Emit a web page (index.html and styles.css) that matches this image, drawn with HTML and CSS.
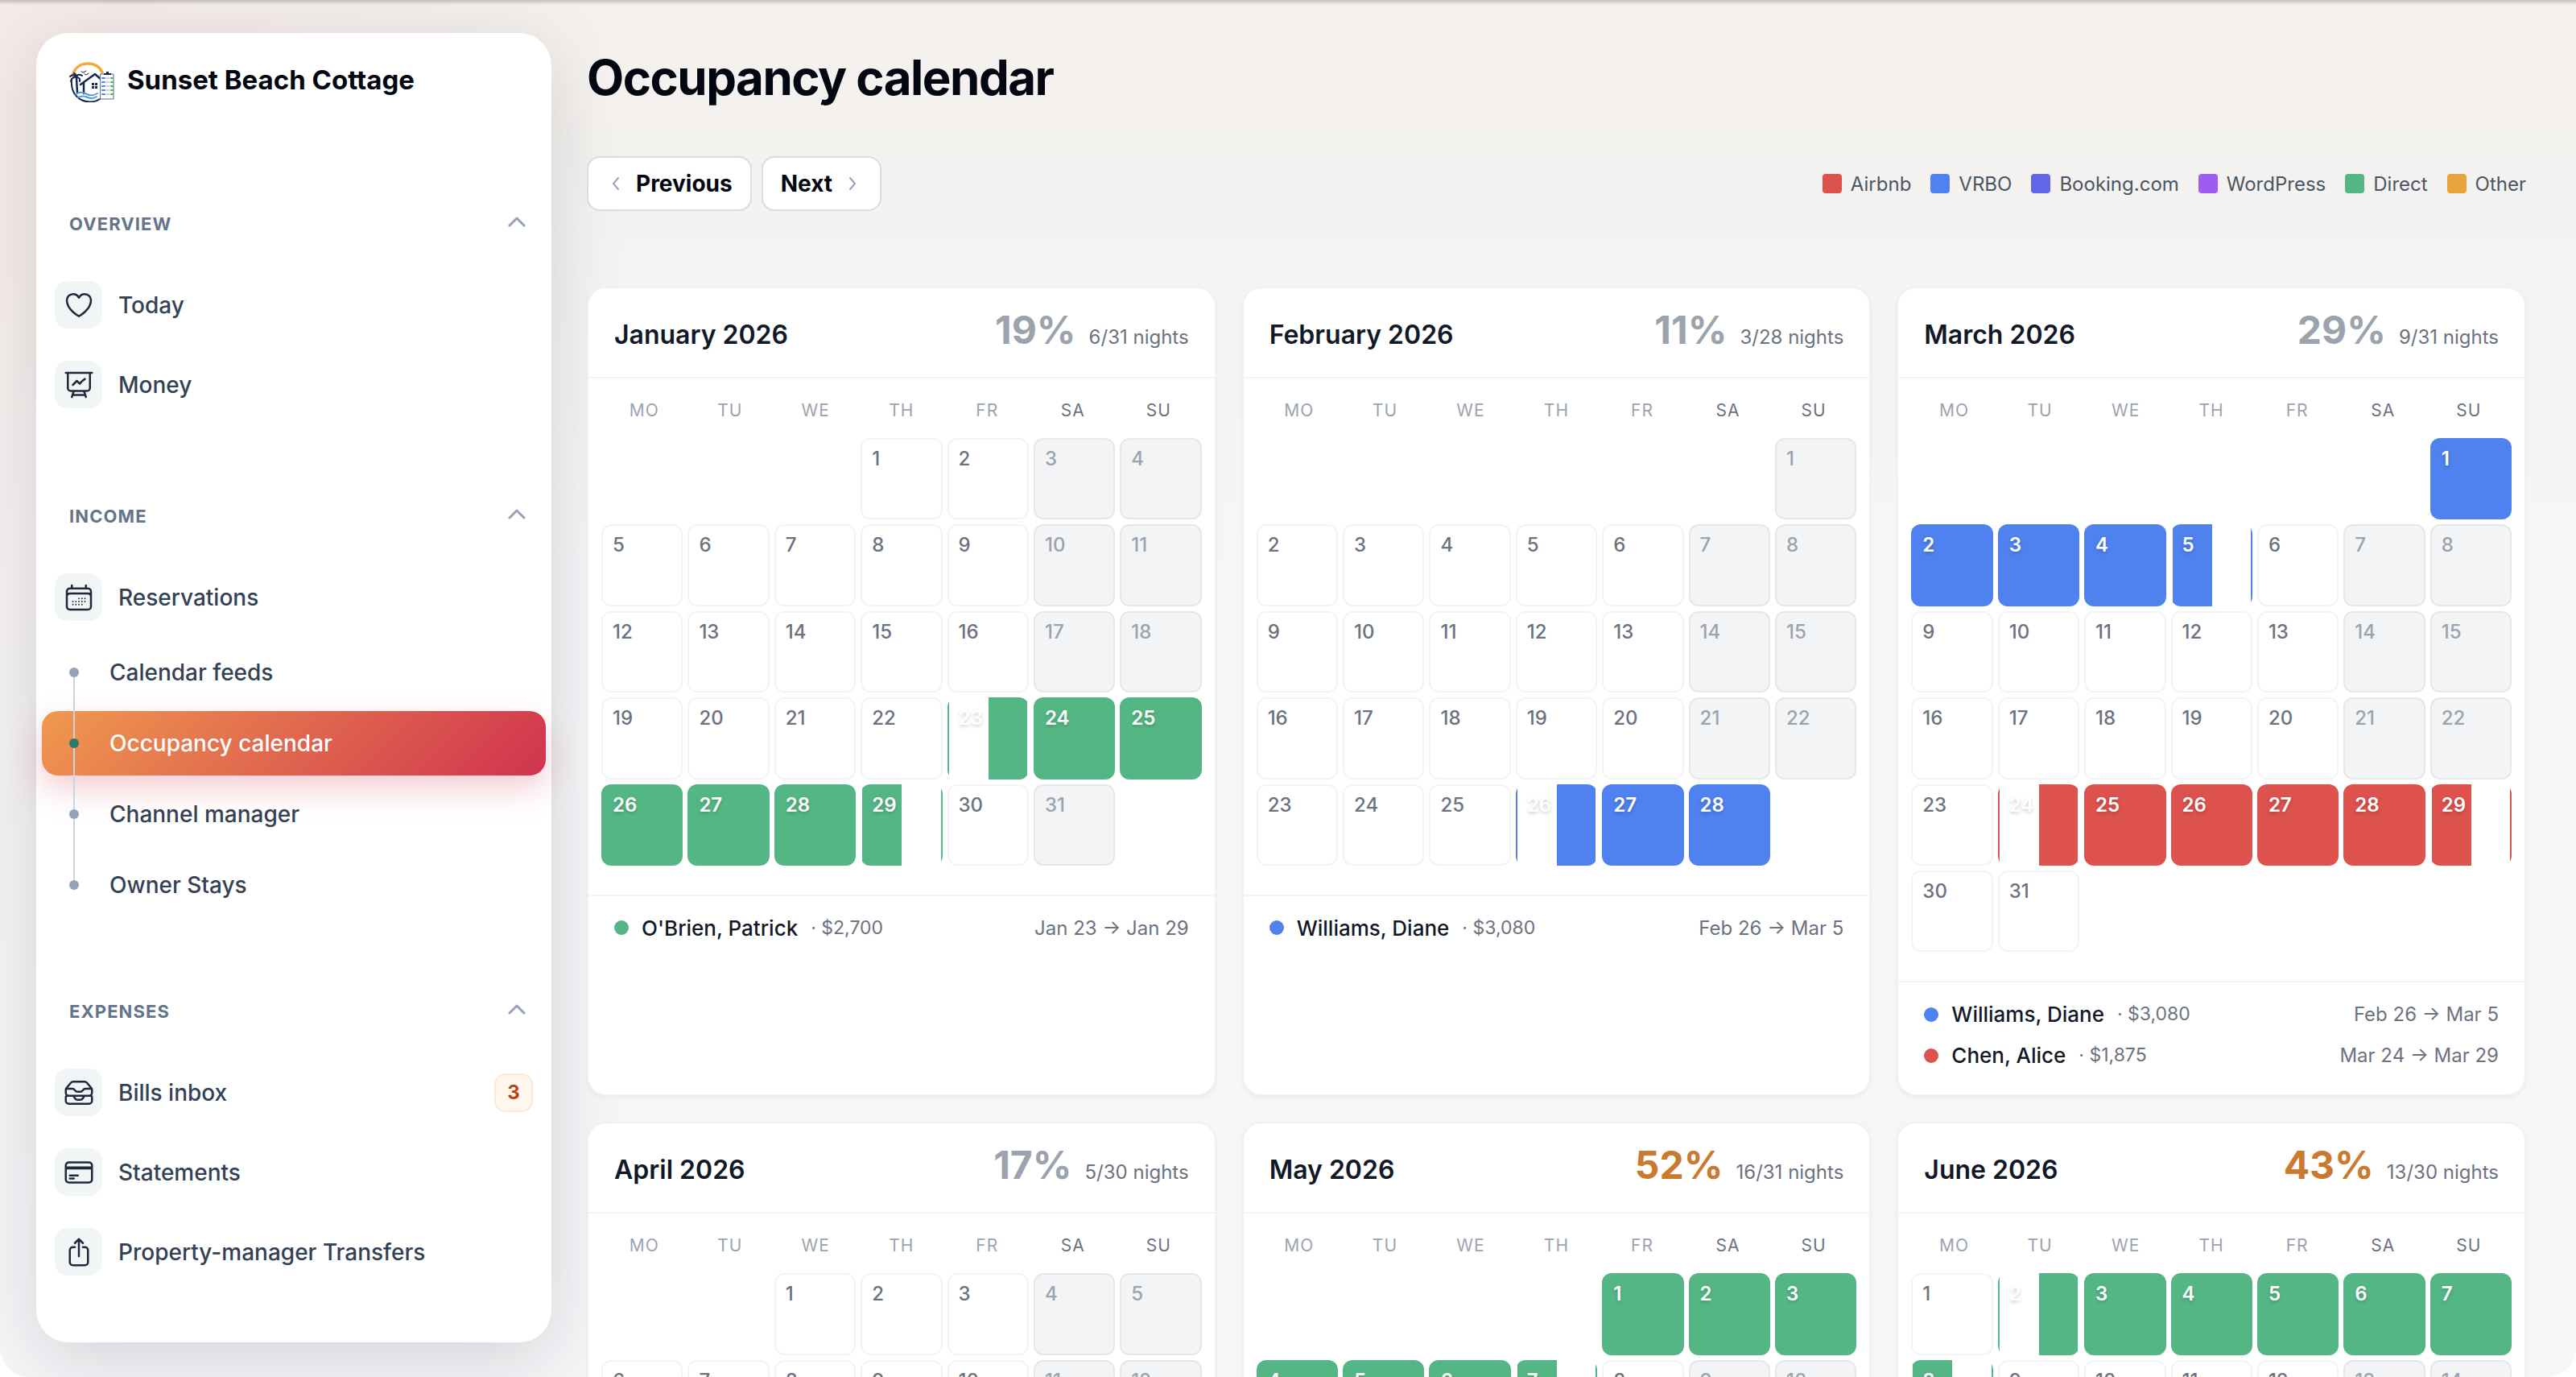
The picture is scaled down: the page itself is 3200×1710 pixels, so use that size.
FILE: index.html
```
<!DOCTYPE html>
<html lang="en">
<head>
    <meta charset="UTF-8">
    <meta name="viewport" content="width=device-width, initial-scale=1.0">
    <title>Occupancy calendar</title>
    <link rel="stylesheet" href="styles.css">
</head>
<body>
    <div class="app">
        <aside class="sidebar">
            <a class="brand" href="#">
                <svg class="brand-logo" viewBox="0 0 56 50" fill="none">
                    <path d="M4 17C7 6 15 2 23 2c9 0 15 4 18 11" stroke="#f5a93a" stroke-width="3.5"/>
                    <path d="M3 21c-1 12 3 21 12 26 8 4 17 3 23-1" stroke="#14284f" stroke-width="2"/>
                    <path d="M14 28l18-13 8 7M18 26v13M9 20l1 18" stroke="#14284f" stroke-width="2.5"/>
                    <path d="M9 19c-3-4-6-3-8-1M9 19c-3-1-6 1-7 5M9 19c1-4 4-4 7-2M9 19c3 0 5 2 4 5M9 19c0-3-1-4-3-5" stroke="#14284f" stroke-width="2"/>
                    <path d="M28 26h3v3h-3zM32 26h3v3h-3zM28 30h3v3h-3zM32 30h3v3h-3z" fill="#14284f"/>
                    <path d="M15 12l3 1 3-2M19 15l2 1 3-2" stroke="#14284f"/>
                    <path d="M8 40c6-4 10-2 14 0s8 2 13-1M11 44c6-3 9-1 12 0s7 2 11-1" stroke="#4f9be0" stroke-width="2"/>
                    <path d="M39 15h16v31H39z" fill="#fff" stroke="#5b6b95"/>
                    <path d="M43 14h9v2h-9zM46 12h3v2h-3z" fill="#14284f"/>
                    <path d="M41 20h3M41 25h3M41 30h3M41 35h3M41 40h3" stroke="#4f82ee" stroke-width="2"/>
                    <path d="M46 20h4M46 25h4M46 30h4M46 35h4M46 40h4" stroke="#9aa5bd"/>
                    <path d="M52 20h2M52 25h2M52 30h2M52 35h2M52 40h2" stroke="#4cae57" stroke-width="2"/>
                </svg>
                <span>Sunset Beach Cottage</span>
            </a>

            <nav class="nav">
                <section class="nav-group">
                    <button class="nav-label" type="button">Overview
                        <svg class="chevron" viewBox="0 0 22 14"><path d="M2 12l9-9 9 9"/></svg>
                    </button>
                    <a class="nav-item" href="#">
                        <span class="nav-icon"><svg viewBox="0 0 24 24"><path d="M21 8.25c0-2.485-2.099-4.5-4.688-4.5-1.935 0-3.597 1.126-4.312 2.733-.715-1.607-2.377-2.733-4.313-2.733C5.1 3.75 3 5.765 3 8.25c0 7.22 9 12 9 12s9-4.78 9-12z"/></svg></span>
                        Today
                    </a>
                    <a class="nav-item" href="#">
                        <span class="nav-icon"><svg viewBox="0 0 24 24"><path d="M3.75 3v11.25A2.25 2.25 0 006 16.5h2.25M3.75 3h-1.5m1.5 0h16.5m0 0h1.5m-1.5 0v11.25A2.25 2.25 0 0118 16.5h-2.25m-7.5 0h7.5m-7.5 0l-1 3m8.5-3l1 3m0 0l.5 1.5m-.5-1.5h-9.5m0 0l-.5 1.5m.75-9l3-3 2.148 2.148A12.061 12.061 0 0116.5 7.605"/></svg></span>
                        Money
                    </a>
                </section>

                <section class="nav-group">
                    <button class="nav-label" type="button">Income
                        <svg class="chevron" viewBox="0 0 22 14"><path d="M2 12l9-9 9 9"/></svg>
                    </button>
                    <a class="nav-item" href="#">
                        <span class="nav-icon"><svg viewBox="0 0 24 24"><path d="M6.75 3v2.25M17.25 3v2.25M3 18.75V7.5a2.25 2.25 0 012.25-2.25h13.5A2.25 2.25 0 0121 7.5v11.25m-18 0A2.25 2.25 0 005.25 21h13.5A2.25 2.25 0 0021 18.75m-18 0v-7.5A2.25 2.25 0 015.25 9h13.5A2.25 2.25 0 0121 11.25v7.5"/><path stroke-width="1.1" d="M12 12.75h.01M12 15h.01M12 17.25h.01M9.75 15h.01M9.75 17.25h.01M7.5 15h.01M7.5 17.25h.01M14.25 12.75h.01M14.25 15h.01M14.25 17.25h.01M16.5 12.75h.01M16.5 15h.01"/></svg></span>
                        Reservations
                    </a>
                    <ul class="subnav">
                        <li><a href="#">Calendar feeds</a></li>
                        <li><a class="active" href="#">Occupancy calendar</a></li>
                        <li><a href="#">Channel manager</a></li>
                        <li><a href="#">Owner Stays</a></li>
                    </ul>
                </section>

                <section class="nav-group">
                    <button class="nav-label" type="button">Expenses
                        <svg class="chevron" viewBox="0 0 22 14"><path d="M2 12l9-9 9 9"/></svg>
                    </button>
                    <a class="nav-item" href="#">
                        <span class="nav-icon"><svg viewBox="0 0 24 24"><path d="M7.875 14.25l1.214 1.942a2.25 2.25 0 001.908 1.058h2.006c.776 0 1.497-.4 1.908-1.058l1.214-1.942M2.41 9h4.636a2.25 2.25 0 011.872 1.002l.164.246a2.25 2.25 0 001.872 1.002h2.092a2.25 2.25 0 001.872-1.002l.164-.246A2.25 2.25 0 0116.954 9h4.636M2.41 9a2.25 2.25 0 00-.16.832V12a2.25 2.25 0 002.25 2.25h15A2.25 2.25 0 0021.75 12V9.832c0-.287-.055-.57-.16-.832M2.41 9a2.25 2.25 0 01.382-.632l3.285-3.832a2.25 2.25 0 011.708-.786h8.43c.657 0 1.281.287 1.709.786l3.284 3.832c.163.19.291.404.382.632M4.5 20.25h15A2.25 2.25 0 0021.75 18v-2.625c0-.621-.504-1.125-1.125-1.125H3.375c-.621 0-1.125.504-1.125 1.125V18a2.25 2.25 0 002.25 2.25z"/></svg></span>
                        Bills inbox
                        <span class="badge">3</span>
                    </a>
                    <a class="nav-item" href="#">
                        <span class="nav-icon"><svg viewBox="0 0 24 24"><path d="M2.25 8.25h19.5M2.25 9h19.5m-16.5 5.25h6m-6 2.25h3m-3.75 3h15a2.25 2.25 0 002.25-2.25V6.75A2.25 2.25 0 0019.5 4.5h-15a2.25 2.25 0 00-2.25 2.25v10.5A2.25 2.25 0 004.5 19.5z"/></svg></span>
                        Statements
                    </a>
                    <a class="nav-item" href="#">
                        <span class="nav-icon"><svg viewBox="0 0 24 24"><path d="M9 8.25H7.5a2.25 2.25 0 00-2.25 2.25v9a2.25 2.25 0 002.25 2.25h9a2.25 2.25 0 002.25-2.25v-9a2.25 2.25 0 00-2.25-2.25H15m0-3l-3-3m0 0l-3 3m3-3V15"/></svg></span>
                        Property-manager Transfers
                    </a>
                </section>
            </nav>
        </aside>

        <main class="main">
            <h1>Occupancy calendar</h1>
            <div class="toolbar">
                <div class="pager">
                    <button class="prev" type="button"><svg viewBox="0 0 10 18"><path d="M8 2L2 9l6 7"/></svg>Previous</button>
                    <button class="next" type="button">Next<svg viewBox="0 0 10 18"><path d="M2 2l6 7-6 7"/></svg></button>
                </div>
                <ul class="legend">
                    <li class="airbnb">Airbnb</li>
                    <li class="vrbo">VRBO</li>
                    <li class="booking">Booking.com</li>
                    <li class="wordpress">WordPress</li>
                    <li class="direct">Direct</li>
                    <li class="other">Other</li>
                </ul>
            </div>
            <div class="months" id="months"></div>
        </main>
    </div>
    <script src="calendar.js"></script>
</body>
</html>
```

FILE: styles.css
```
* {
    box-sizing: border-box;
}

html {
    background-color: #fff;
}

body {
    margin: 0;
    font-family: Inter, "Liberation Sans", sans-serif;
    font-size: 24px;
    color: #111827;
}

ul {
    list-style: none;
    margin: 0;
    padding: 0;
}

a {
    color: inherit;
    text-decoration: none;
}

button {
    font-family: inherit;
    cursor: pointer;
}

svg {
    fill: none;
    stroke-linecap: round;
    stroke-linejoin: round;
}

/* Page shell */
.app {
    display: flex;
    align-items: flex-start;
    gap: 44px;
    height: 100vh;
    overflow: hidden;
    padding: 41px 62px 0 45px;
    border-radius: 0 0 36px 36px;
    background:
        linear-gradient(rgba(0, 0, 0, 0.2), rgba(0, 0, 0, 0) 6px),
        radial-gradient(ellipse 600px 1500px at 0 0, rgba(246, 228, 226, 0.5), rgba(246, 228, 226, 0)),
        linear-gradient(#f4f0ed, #f4f3f1 300px, #f5f6f8 720px);
}

/* Sidebar */
.sidebar {
    flex: 0 0 640px;
    height: calc(100vh - 84px);
    padding: 32px 7px;
    border-radius: 40px;
    background-color: #fff;
    box-shadow: 0 20px 90px rgba(20, 20, 28, 0.15);
}

.brand {
    display: flex;
    align-items: center;
    gap: 16px;
    height: 52px;
    padding: 0 34px;
    font-size: 33px;
    font-weight: 700;
    color: #030712;
}

.brand-logo {
    width: 56px;
    height: 50px;
    margin-top: 6px;
}

.nav {
    display: flex;
    flex-direction: column;
    gap: 88px;
    padding-top: 127px;
}

.nav-label {
    display: flex;
    justify-content: space-between;
    align-items: center;
    width: 100%;
    height: 52px;
    margin-bottom: 25px;
    padding: 0 25px 0 34px;
    border: 0;
    background: none;
    font-size: 22px;
    font-weight: 700;
    letter-spacing: 0.05em;
    text-transform: uppercase;
    color: #64748b;
}

.chevron {
    width: 22px;
    height: 14px;
    margin-bottom: 6px;
    stroke: #94a3b8;
    stroke-width: 3;
}

.nav-item {
    display: flex;
    align-items: center;
    gap: 20px;
    height: 99px;
    padding: 0 16px;
    font-size: 28px;
    font-weight: 500;
    color: #334155;
}

.nav-icon {
    display: flex;
    align-items: center;
    justify-content: center;
    width: 59px;
    height: 59px;
    border-radius: 16px;
    background-color: #f1f5f6;
}

.nav-icon svg {
    width: 40px;
    height: 40px;
    stroke: #1e293b;
    stroke-width: 1.5;
}

.badge {
    display: flex;
    align-items: center;
    justify-content: center;
    width: 48px;
    height: 48px;
    margin-left: auto;
    border: 2px solid #fde8d7;
    border-radius: 14px;
    background-color: #fff7ed;
    font-size: 24px;
    font-weight: 700;
    color: #b9430f;
}

.subnav {
    display: flex;
    flex-direction: column;
    gap: 8px;
    position: relative;
    padding: 4px 0 3px;
}

/* Line that joins the bullets */
.subnav::after {
    content: "";
    position: absolute;
    top: 44px;
    bottom: 44px;
    left: 39px;
    width: 2px;
    background-color: #cbd5e1;
}

.subnav a {
    display: flex;
    align-items: center;
    gap: 38px;
    height: 80px;
    padding-left: 34px;
    border-radius: 20px;
    font-size: 28px;
    font-weight: 500;
    color: #334155;
}

.subnav a::before {
    content: "";
    position: relative;
    z-index: 1;
    width: 12px;
    height: 12px;
    border-radius: 50%;
    background-color: #94a3b8;
}

.subnav a.active {
    color: #fff;
    background: linear-gradient(135deg, #f0994f, #d0334e);
    box-shadow: 0 16px 40px rgba(208, 51, 78, 0.25);
}

.subnav a.active::before {
    background-color: #2b786c;
}

/* Main column */
.main {
    flex: 1;
    min-width: 0;
}

h1 {
    margin: 19px 0 62px;
    font-size: 60px;
    font-weight: 700;
    line-height: 72px;
    letter-spacing: -0.025em;
    color: #030712;
}

.toolbar {
    display: flex;
    justify-content: space-between;
    align-items: center;
    margin-bottom: 94px;
}

.pager {
    display: flex;
    gap: 12px;
}

.pager button {
    display: flex;
    align-items: center;
    gap: 20px;
    height: 68px;
    padding: 0 22px;
    border: 2px solid #dddbdc;
    border-radius: 16px;
    background-color: #fff;
    font-size: 28px;
    font-weight: 700;
    color: #030712;
}

.pager .prev {
    padding-left: 29px;
}

.pager .next {
    padding-right: 29px;
}

.pager svg {
    width: 10px;
    height: 18px;
    stroke: #94a3b8;
    stroke-width: 2;
}

.legend {
    display: flex;
    gap: 24px;
    color: #4b5563;
}

.legend li {
    display: flex;
    align-items: center;
    gap: 11px;
}

.legend li::before {
    content: "";
    width: 24px;
    height: 24px;
    border-radius: 4px;
    background-color: var(--channel);
}

/* Booking channels */
.airbnb { --channel: #dd524c; }
.vrbo { --channel: #4f82ee; }
.booking { --channel: #6466ea; }
.wordpress { --channel: #9f5cf0; }
.direct { --channel: #55b685; }
.other { --channel: #eaa43e; }

/* Month cards */
.months {
    display: grid;
    grid-template-columns: repeat(3, 1fr);
    gap: 32px;
}

.month {
    border: 2px solid #f1f1f3;
    border-radius: 24px;
    background-color: #fff;
    box-shadow: 0 2px 4px rgba(0, 0, 0, 0.05);
}

.month-header {
    display: flex;
    align-items: baseline;
    gap: 16px;
    padding: 20px 32px 26px;
    border-bottom: 2px solid #f3f4f6;
}

.month-header h2 {
    margin: 0 auto 0 0;
    font-size: 32px;
    font-weight: 600;
}

.rate {
    font-size: 48px;
    font-weight: 700;
    line-height: 64px;
    color: #9ca3af;
}

.rate.mid {
    color: #c97a2e;
}

.nights {
    color: #6b7280;
}

.weekdays,
.days {
    display: grid;
    grid-template-columns: repeat(7, 1fr);
}

.weekdays {
    padding: 16px 16px 10px;
    font-size: 21px;
    line-height: 48px;
    letter-spacing: 0.05em;
    text-align: center;
    color: #9ca3af;
}

.weekdays .weekend {
    color: #6b7280;
}

.days {
    gap: 6px;
    padding: 0 16px 36px;
}

.day {
    aspect-ratio: 1;
    padding: 9px 12px;
    border: 2px solid #f3f4f6;
    border-radius: 12px;
    line-height: 30px;
    font-weight: 500;
    color: #6b7280;
}

.day.weekend {
    border-color: #e5e7eb;
    background-color: #f3f4f6;
    color: #9ca3af;
}

.day.booked {
    border-color: transparent;
    background: var(--channel) border-box;
    font-weight: 600;
    color: #fff;
    text-shadow: 0 2px 4px rgba(0, 0, 0, 0.2);
}

/* Half days for arrival and departure */
.day.check-in {
    background: linear-gradient(90deg, transparent 50%, var(--channel) 50%);
}

.day.check-out {
    background: linear-gradient(90deg, var(--channel) 50%, transparent 50%);
}

.stays {
    padding: 14px 32px 23px;
    border-top: 2px solid #f3f4f6;
    color: #6b7280;
}

.stays li {
    display: flex;
    align-items: center;
    gap: 16px;
    line-height: 51px;
}

.stays li::before {
    content: "";
    width: 18px;
    height: 18px;
    border-radius: 50%;
    background-color: var(--channel);
}

.stays .guest {
    font-size: 26px;
    font-weight: 500;
    color: #111827;
}

.stays .price {
    font-size: 23px;
}

.stays .dates {
    margin-left: auto;
}
```

FILE: calendar.js
```
const weekdays = ['MO', 'TU', 'WE', 'TH', 'FR', 'SA', 'SU'];

// start: column of day 1, with Monday as 0
const months = [
    {
        name: 'January 2026', days: 31, start: 3, nights: 6,
        stays: [{ guest: "O'Brien, Patrick", price: '$2,700', dates: 'Jan 23 → Jan 29', channel: 'direct', from: 23, to: 29 }]
    },
    {
        name: 'February 2026', days: 28, start: 6, nights: 3,
        stays: [{ guest: 'Williams, Diane', price: '$3,080', dates: 'Feb 26 → Mar 5', channel: 'vrbo', from: 26, to: 33 }]
    },
    {
        name: 'March 2026', days: 31, start: 6, nights: 9,
        stays: [
            { guest: 'Williams, Diane', price: '$3,080', dates: 'Feb 26 → Mar 5', channel: 'vrbo', from: -2, to: 5 },
            { guest: 'Chen, Alice', price: '$1,875', dates: 'Mar 24 → Mar 29', channel: 'airbnb', from: 24, to: 29 }
        ]
    },
    { name: 'April 2026', days: 30, start: 2, nights: 5, stays: [] },
    {
        name: 'May 2026', days: 31, start: 4, nights: 16,
        stays: [{ channel: 'direct', from: 0, to: 7 }]
    },
    {
        name: 'June 2026', days: 30, start: 0, nights: 13,
        stays: [{ channel: 'direct', from: 2, to: 8 }]
    }
];

function dayCell(month, day) {
    const column = (month.start + day - 1) % 7;
    const classes = ['day'];
    if (column > 4) {
        classes.push('weekend');
    }
    const stay = month.stays.find(function(s) {
        return day >= s.from && day <= s.to;
    });
    if (stay) {
        classes.push('booked', stay.channel);
        if (day === stay.from) {
            classes.push('check-in');
        }
        if (day === stay.to) {
            classes.push('check-out');
        }
    }
    // The first day sets the column, the rest follow it
    const place = day === 1 ? ` style="grid-column-start: ${column + 1}"` : '';
    return `<div class="${classes.join(' ')}"${place}>${day}</div>`;
}

function monthCard(month) {
    const rate = Math.round(month.nights / month.days * 100);
    let html = `<article class="month">
        <header class="month-header">
            <h2>${month.name}</h2>
            <span class="rate ${rate >= 40 ? 'mid' : ''}">${rate}%</span>
            <span class="nights">${month.nights}/${month.days} nights</span>
        </header>
        <div class="weekdays">`;

    weekdays.forEach(function(name, i) {
        html += `<div class="${i > 4 ? 'weekend' : 'workday'}">${name}</div>`;
    });
    html += '</div><div class="days">';
    for (let day = 1; day <= month.days; day++) {
        html += dayCell(month, day);
    }
    html += '</div>';

    const listed = month.stays.filter(function(s) {
        return s.guest;
    });
    if (listed.length) {
        html += '<ul class="stays">';
        listed.forEach(function(s) {
            html += `<li class="${s.channel}"><span class="guest">${s.guest}</span><span class="price">· ${s.price}</span><span class="dates">${s.dates}</span></li>`;
        });
        html += '</ul>';
    }
    return html + '</article>';
}

document.getElementById('months').innerHTML = months.map(monthCard).join('');
```
